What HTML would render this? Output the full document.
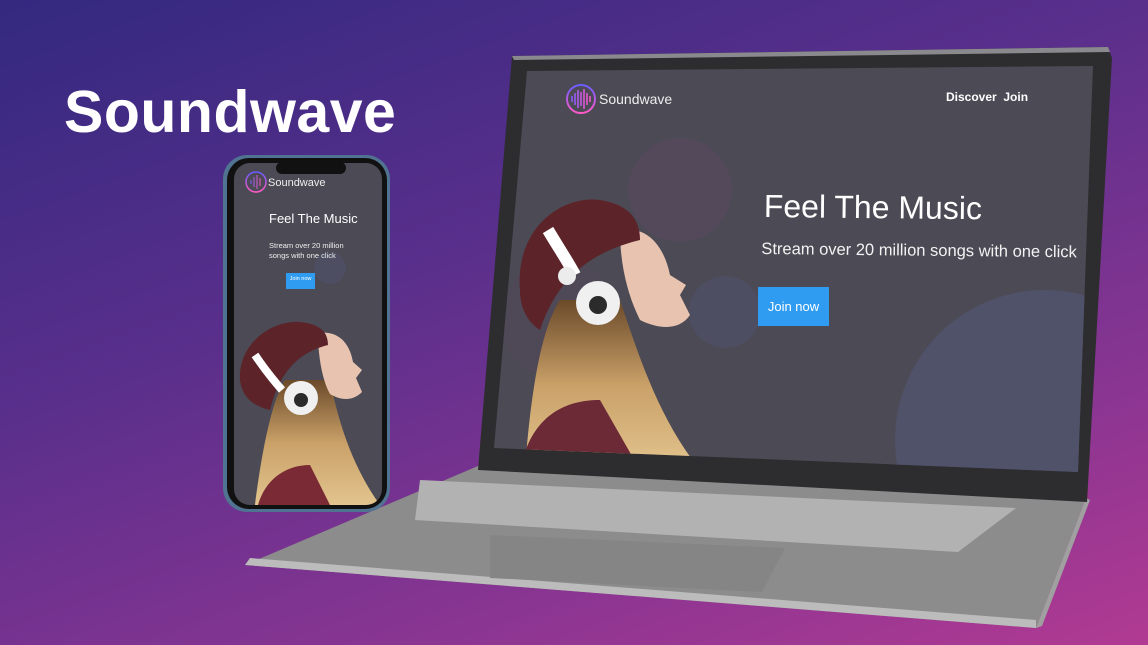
<!DOCTYPE html>
<html><head><meta charset="utf-8"><style>
html,body{margin:0;padding:0}
body{width:1148px;height:645px;overflow:hidden;position:relative;background:linear-gradient(160deg,#33297f 0%,#5a2f8c 40%,#8a3592 75%,#b13a92 100%);font-family:"Liberation Sans",sans-serif}
.t{position:absolute;color:#fff;white-space:nowrap}
</style></head><body>
<div class="t" style="left:64px;top:78px;font-size:59px;font-weight:bold;letter-spacing:0.5px">Soundwave</div>

<svg width="1148" height="645" style="position:absolute;left:0;top:0">
<defs>
<linearGradient id="lg" x1="0" y1="0" x2="0" y2="1"><stop offset="0" stop-color="#6a5cff"/><stop offset="1" stop-color="#ff5ac8"/></linearGradient>
<linearGradient id="hair" x1="0" y1="0" x2="0" y2="1"><stop offset="0" stop-color="#6b4a2a"/><stop offset="0.5" stop-color="#c9a068"/><stop offset="1" stop-color="#e3c48e"/></linearGradient>
<clipPath id="scr"><polygon points="527,71 1093,66 1078,472 494,448"/></clipPath>
<clipPath id="pscr"><rect x="234" y="163" width="148" height="342" rx="16"/></clipPath>
</defs>
<!-- laptop base -->
<polygon points="478,466 1086,498 1036,628 245,565" fill="#8c8c8c"/>
<polygon points="245,565 1036,628 1036,620 250,558" fill="#bcbcbc"/>
<polygon points="420,480 1016,508 958,552 415,520" fill="#b2b2b2"/>
<polygon points="490,535 785,548 762,592 490,578" fill="#858585"/>
<polygon points="1086,498 1036,628 1042,626 1090,500" fill="#a0a0a0"/>
<!-- lid -->
<polygon points="512,56 1108,47 1112,58 1087,502 478,470" fill="#2d2d2f"/>
<polygon points="512,56 1108,47 1110,52 514,60" fill="#8a8a8e"/>
<polygon points="527,71 1093,66 1078,472 494,448" fill="#4b4a55"/>
<g clip-path="url(#scr)">
<circle cx="680" cy="190" r="52" fill="#54495a"/>
<circle cx="725" cy="312" r="36" fill="#4d4e62"/>
<circle cx="1045" cy="440" r="150" fill="#50526a"/>
<circle cx="560" cy="320" r="60" fill="#4f4856"/>
<path d="M525,470 C530,400 540,330 560,300 L620,300 C640,360 660,420 700,470 Z" fill="url(#hair)"/>
<path d="M520,470 C530,420 560,400 600,400 L640,470 Z" fill="#6b2a35"/>
<path d="M620,230 C650,225 665,250 670,275 L686,285 L680,295 L690,315 C680,330 660,330 640,320 C630,300 620,270 620,230 Z" fill="#e8c4b0"/>
<path d="M520,290 C515,230 560,195 600,200 C630,205 640,220 640,240 C600,250 560,270 540,330 C525,320 520,305 520,290 Z" fill="#5c2329"/>
<path d="M548,230 C560,250 570,265 575,275" stroke="#fff" stroke-width="12" fill="none"/>
<circle cx="598" cy="303" r="22" fill="#f0f0f0"/><circle cx="598" cy="305" r="9" fill="#2b2b2b"/>
<circle cx="567" cy="276" r="9" fill="#ececec"/>
</g>
<!-- logo laptop -->
<circle cx="581" cy="99" r="14" fill="none" stroke="url(#lg)" stroke-width="2"/>
<g stroke-width="1.6">
<line x1="572" y1="96" x2="572" y2="102" stroke="#8a5cff"/><line x1="575" y1="93" x2="575" y2="105" stroke="#9a5cf8"/><line x1="578" y1="90" x2="578" y2="108" stroke="#b05cf0"/><line x1="581" y1="92" x2="581" y2="106" stroke="#c85ae0"/><line x1="584" y1="89" x2="584" y2="109" stroke="#d85ad8"/><line x1="587" y1="93" x2="587" y2="105" stroke="#e85ad0"/><line x1="590" y1="96" x2="590" y2="102" stroke="#f05ac8"/>
</g>
<!-- phone -->
<rect x="223" y="155" width="167" height="357" rx="24" fill="#4f7390"/>
<rect x="227" y="158" width="160" height="351" rx="22" fill="#111"/>
<rect x="234" y="163" width="148" height="342" rx="16" fill="#4b4a55"/>
<g clip-path="url(#pscr)">
<circle cx="330" cy="268" r="16" fill="#4d4e62"/>
<path d="M255,505 C262,450 272,400 285,380 L330,380 C340,430 355,470 380,505 Z" fill="url(#hair)"/>
<path d="M258,505 C265,480 285,465 310,465 L330,505 Z" fill="#7a2a35"/>
<path d="M318,333 C340,330 350,345 353,362 L362,370 L356,378 L362,392 C352,402 340,400 330,394 C322,380 318,355 318,333 Z" fill="#e8c4b0"/>
<path d="M240,380 C238,345 270,320 300,322 C320,324 328,332 328,345 C300,352 280,370 270,410 C250,405 242,395 240,380 Z" fill="#5c2329"/>
<path d="M255,355 C265,370 275,382 282,390" stroke="#fff" stroke-width="8" fill="none"/>
<circle cx="301" cy="398" r="17" fill="#f0f0f0"/><circle cx="301" cy="400" r="7" fill="#2b2b2b"/>
</g>
<rect x="276" y="162" width="70" height="12" rx="6" fill="#111"/>
<circle cx="256" cy="182" r="10" fill="none" stroke="url(#lg)" stroke-width="1.5"/>
<g stroke-width="1"><line x1="251" y1="180" x2="251" y2="184" stroke="#8a5cff"/><line x1="254" y1="177" x2="254" y2="187" stroke="#b05cf0"/><line x1="257" y1="175" x2="257" y2="189" stroke="#d85ad8"/><line x1="260" y1="178" x2="260" y2="186" stroke="#f05ac8"/></g>
<rect x="286" y="273" width="29" height="16" fill="#2f9cf2"/>
</svg>

<div class="t" style="left:599px;top:91px;font-size:14px;color:#eee">Soundwave</div>
<div class="t" style="left:946px;top:90px;font-size:12px;font-weight:bold">Discover&nbsp; Join</div>
<div style="position:absolute;left:764px;top:188px;transform:rotate(0.6deg);transform-origin:left top">
<div class="t" style="left:0;top:0;font-size:32px">Feel The Music</div>
<div class="t" style="left:-2px;top:52px;font-size:16.5px;color:#f2f2f2">Stream over 20 million songs with one click</div>
</div>
<div style="position:absolute;left:758px;top:287px;width:71px;height:39px;background:#2f9cf2;color:#fff;font-size:13px;line-height:39px;text-align:center">Join now</div>

<div class="t" style="left:268px;top:177px;font-size:11px;color:#eee">Soundwave</div>
<div class="t" style="left:269px;top:211px;font-size:13px">Feel The Music</div>
<div class="t" style="left:269px;top:241px;font-size:7.5px;line-height:10px;color:#eee">Stream over 20 million<br>songs with one click</div>
<div class="t" style="left:286px;top:276px;width:29px;text-align:center;font-size:5.5px">Join now</div>
</body></html>
